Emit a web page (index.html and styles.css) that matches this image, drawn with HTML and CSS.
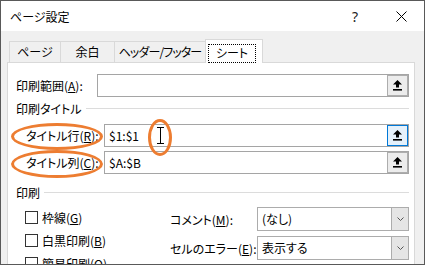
FILE: index.html
```html
<!DOCTYPE html>
<html lang="ja">
<head>
    <meta charset="UTF-8">
    <meta name="viewport" content="width=device-width, initial-scale=1.0">
    <title>ページ設定</title>
    <link rel="stylesheet" href="styles.css">
</head>
<body>
    <div class="dialog">
        <div class="titlebar">
            <span class="title">ページ設定</span>
            <span class="tbtn help">?</span>
            <span class="tbtn">
                <svg width="11" height="11" viewBox="0 0 11 11"><path d="M0.5 0.5L10.5 10.5M10.5 0.5L0.5 10.5" stroke="#000" stroke-width="1"/></svg>
            </span>
        </div>

        <div class="body">
            <div class="tabs">
                <div class="tab t1">ページ</div>
                <div class="tab t2">余白</div>
                <div class="tab t3">ヘッダー/フッター</div>
                <div class="tab t4 active"><span class="focus">シート</span></div>
            </div>

            <div class="panel">
                <!-- 印刷範囲 -->
                <div class="row first">
                    <span class="lbl w-area">印刷範囲(<u>A</u>):</span>
                    <div class="field">
                        <span class="val"></span>
                        <span class="pick">
                            <svg width="9" height="11" viewBox="0 0 9 11"><path d="M4.5 0L9 4.5H6V7.5H3V4.5H0Z" fill="#000"/><rect x="0" y="9" width="9" height="1.6" fill="#000"/></svg>
                        </span>
                    </div>
                </div>

                <div class="group">印刷タイトル</div>

                <div class="row r2">
                    <span class="lbl w-title">タイトル行(<u>R</u>):</span>
                    <div class="field">
                        <span class="val">$1:$1</span>
                        <span class="pick focused">
                            <svg width="9" height="11" viewBox="0 0 9 11"><path d="M4.5 0L9 4.5H6V7.5H3V4.5H0Z" fill="#000"/><rect x="0" y="9" width="9" height="1.6" fill="#000"/></svg>
                        </span>
                    </div>
                </div>

                <div class="row r3">
                    <span class="lbl w-title">タイトル列(<u>C</u>):</span>
                    <div class="field">
                        <span class="val">$A:$B</span>
                        <span class="pick">
                            <svg width="9" height="11" viewBox="0 0 9 11"><path d="M4.5 0L9 4.5H6V7.5H3V4.5H0Z" fill="#000"/><rect x="0" y="9" width="9" height="1.6" fill="#000"/></svg>
                        </span>
                    </div>
                </div>

                <div class="group g2">印刷</div>

                <div class="opts">
                    <div class="checks">
                        <div class="check"><span class="box"></span>枠線(<u>G</u>)</div>
                        <div class="check"><span class="box"></span>白黒印刷(<u>B</u>)</div>
                        <div class="check"><span class="box"></span>簡易印刷(<u>Q</u>)</div>
                    </div>
                    <div class="combos">
                        <div class="combo-row">
                            <span class="lbl w-combo">コメント(<u>M</u>):</span>
                            <div class="select">
                                <span class="val">(なし)</span>
                                <span class="drop"><svg width="7" height="4" viewBox="0 0 7 4"><path d="M0.5 0.5L3.5 3.5L6.5 0.5" fill="none" stroke="#555" stroke-width="1"/></svg></span>
                            </div>
                        </div>
                        <div class="combo-row">
                            <span class="lbl w-combo">セルのエラー(<u>E</u>):</span>
                            <div class="select">
                                <span class="val">表示する</span>
                                <span class="drop"><svg width="7" height="4" viewBox="0 0 7 4"><path d="M0.5 0.5L3.5 3.5L6.5 0.5" fill="none" stroke="#555" stroke-width="1"/></svg></span>
                            </div>
                        </div>
                    </div>
                </div>
            </div>
        </div>

        <!-- 注釈の丸とカーソル -->
        <div class="mark m1"></div>
        <div class="mark m2"></div>
        <div class="mark m3"></div>
        <svg class="ibeam" width="7" height="17" viewBox="0 0 7 17"><path d="M0 0.5H7M3.5 0.5V16.5M0 16.5H7" stroke="#000" stroke-width="1" fill="none"/></svg>
    </div>
</body>
</html>
```

FILE: styles.css
```css
* {
    margin: 0;
    padding: 0;
    box-sizing: border-box;
}

html, body {
    width: 425px;
    height: 265px;
    overflow: hidden;
}

body {
    font-family: "Noto Sans CJK JP", "Noto Sans", sans-serif;
    font-size: 12px;
    color: #000;
    font-feature-settings: "palt";
    background-color: #f0f0f0;
}

.dialog {
    position: relative;
    width: 425px;
    height: 265px;
    border: 1px solid #595959;
    background: #f0f0f0;
    overflow: hidden;
}

.titlebar {
    display: flex;
    align-items: center;
    height: 30px;
    background: #fff;
}

.title {
    flex: 1;
    padding-left: 9px;
}

.tbtn {
    width: 46px;
    height: 30px;
    display: flex;
    align-items: center;
    justify-content: center;
}

.help {
    font-family: "Noto Sans", sans-serif;
    font-size: 14px;
    color: #222;
}

.body {
    padding: 8px 0 0 6px;
}

.tabs {
    display: flex;
    align-items: flex-end;
    margin-left: 2px;
}

.tab {
    height: 21px;
    margin-left: -1px;
    border: 1px solid #d9d9d9;
    border-bottom: none;
    background: #f0f0f0;
    text-align: center;
    line-height: 19px;
    white-space: nowrap;
    overflow: hidden;
}

.tab:first-child {
    margin-left: 0;
}

.t1 { width: 52px; }
.t2 { width: 55px; }
.t3 { width: 92px; letter-spacing: -0.9px; }
.t4 { width: 58px; }

.tab.active {
    position: relative;
    z-index: 1;
    height: 24px;
    margin-bottom: -1px;
    padding: 3px 0 0 0;
    background: #fff;
    text-align: left;
}

.focus {
    display: inline-block;
    margin-left: 2px;
    height: 19px;
    width: 48px;
    border: 1px dotted #000;
    text-align: center;
    line-height: 16px;
}

.panel {
    width: 408px;
    height: 230px;
    padding: 0 5px 0 8px;
    border: 1px solid #d9d9d9;
    background: #fff;
}

.row {
    display: flex;
    align-items: center;
    height: 23px;
}

.row.first { margin-top: 11px; }
.row.r2 { margin-top: 5px; }
.row.r3 { margin-top: 4px; }

.lbl {
    flex: none;
    white-space: nowrap;
}

.w-area { width: 81px; }
.w-title { width: 88px; padding-left: 10px; }
.w-combo { width: 87px; }

.field {
    flex: 1;
    height: 23px;
    display: flex;
    align-items: center;
    border: 1px solid #a5a5a5;
    background: #fff;
}

.val {
    flex: 1;
    padding-left: 4px;
}

.pick {
    width: 21px;
    height: 21px;
    display: flex;
    align-items: center;
    justify-content: center;
    border: 1px solid #adadad;
    background: #ececec;
}

.pick.focused {
    border-color: #0078d7;
    background: #e5f1fb;
}

.group {
    display: flex;
    align-items: center;
    height: 22px;
}

.group::after {
    content: "";
    flex: 1;
    height: 1px;
    margin-left: 4px;
    background: #dcdcdc;
}

.group.g2 { margin-top: 7px; }

.opts {
    display: flex;
    margin-top: 3px;
}

.checks {
    width: 154px;
    padding-left: 9px;
}

.check {
    display: flex;
    align-items: center;
    height: 23px;
}

.box {
    width: 13px;
    height: 13px;
    margin-right: 4px;
    border: 1px solid #333;
    background: #fff;
}

.combos {
    flex: 1;
    display: flex;
    flex-direction: column;
    gap: 5px;
    padding-top: 1px;
}

.combo-row {
    display: flex;
    align-items: center;
    height: 24px;
}

.select {
    flex: 1;
    height: 24px;
    display: flex;
    border: 1px solid #acacac;
}

.select .val {
    line-height: 22px;
}

.drop {
    width: 17px;
    display: flex;
    align-items: center;
    justify-content: center;
    border-left: 1px solid #acacac;
    background: #e5e5e5;
}

.mark {
    position: absolute;
    border: 3px solid #ed7d31;
    border-radius: 50%;
}

.m1 { left: 10px; top: 122px; width: 92px; height: 27px; }
.m2 { left: 10px; top: 149px; width: 92px; height: 28px; }
.m3 { left: 147px; top: 118px; width: 24px; height: 37px; }

.ibeam {
    position: absolute;
    left: 156px;
    top: 126px;
}
```
